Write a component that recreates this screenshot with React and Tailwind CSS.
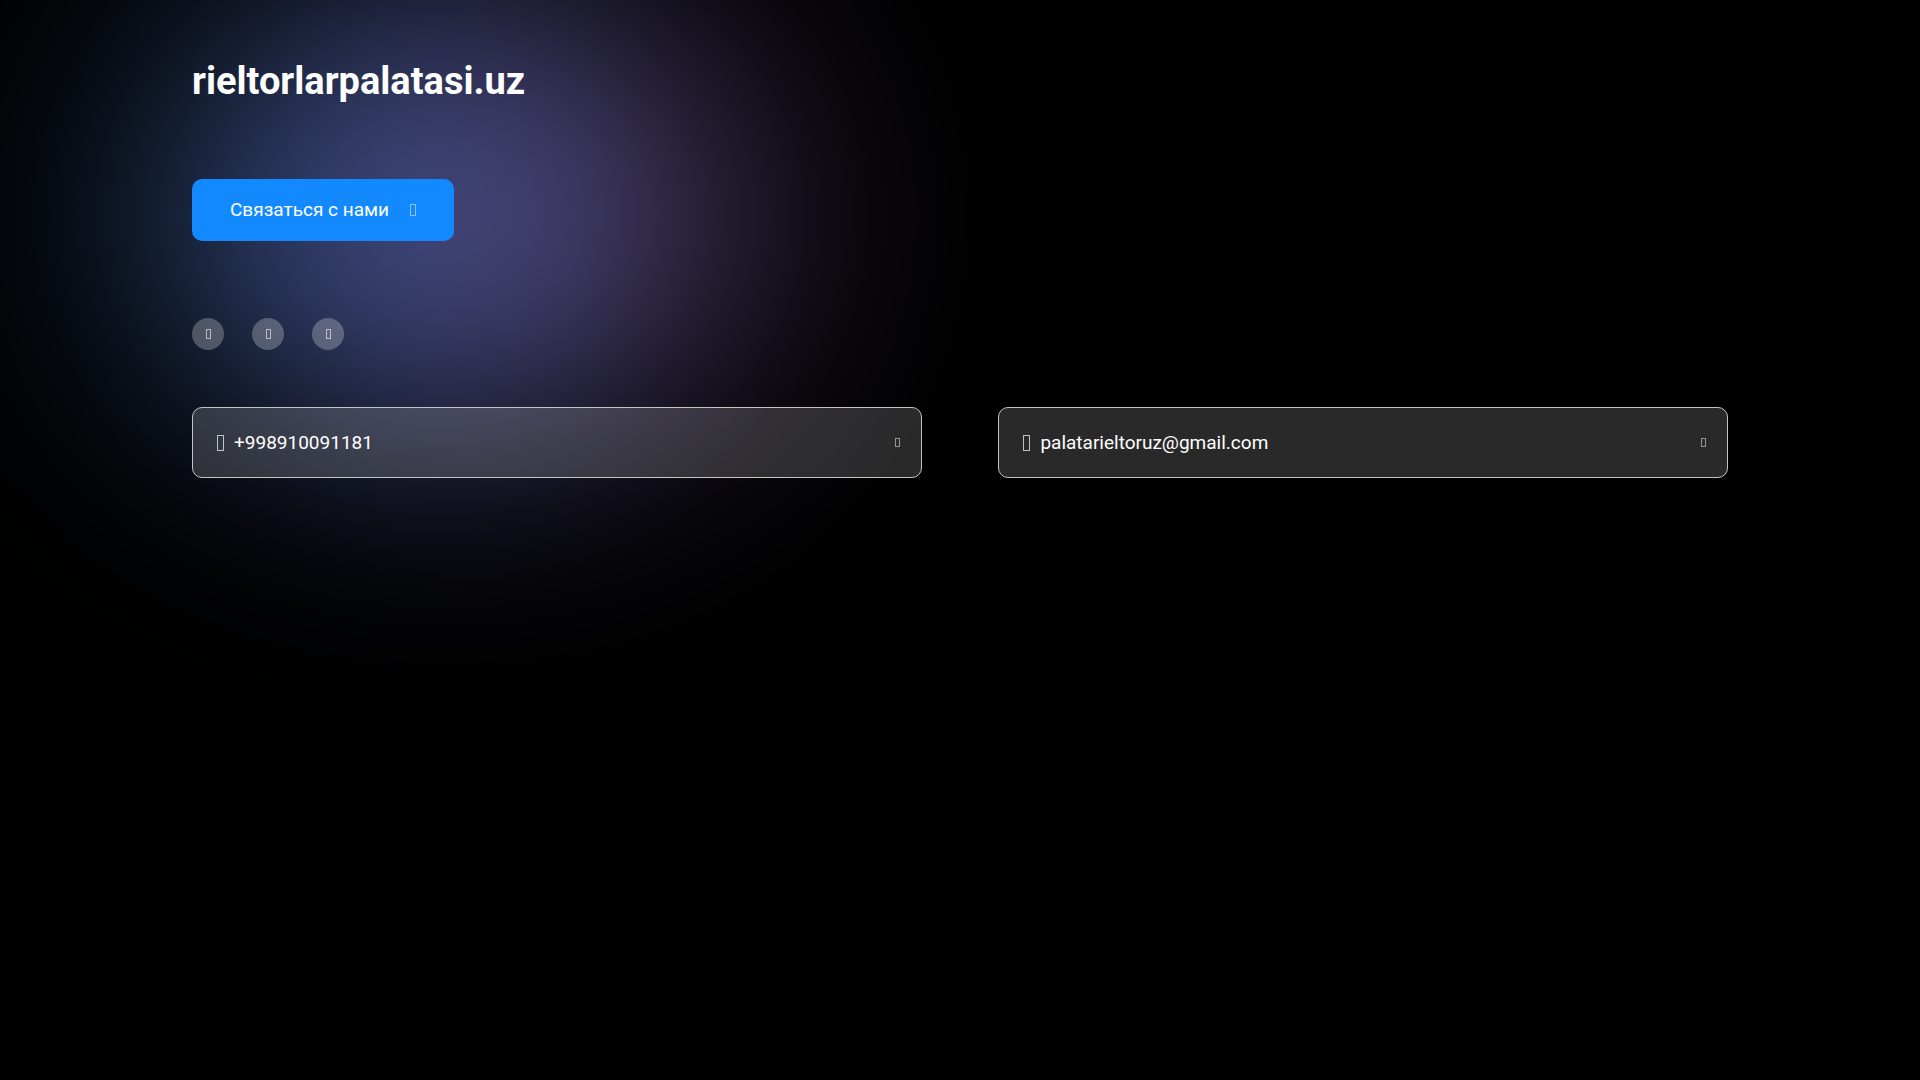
import React from "react";
import clsx from "clsx";

const socials = [
    { label: "Telegram", href: "#telegram" },
    { label: "Instagram", href: "#instagram" },
    { label: "Facebook", href: "#facebook" },
];

const contacts = [
    { text: "+998910091181", href: "tel:+998910091181" },
    { text: "palatarieltoruz@gmail.com", href: "mailto:palatarieltoruz@gmail.com" },
];

// empty glyph box
const Glyph = ({ className }) => (
    <span aria-hidden="true" className={clsx("block shrink-0 border", className)} />
);

const Glow = () => (
    <div
        aria-hidden="true"
        className="pointer-events-none absolute left-[130px] top-0 h-[430px] w-[640px] rounded-[50%] bg-linear-to-r from-[#123e60] via-[#505496] to-[#442a46] blur-[130px]"
    />
);

const ContactCard = ({ text, href }) => (
    <a
        href={href}
        className="flex flex-1 items-center rounded-[10px] border border-[#c4c4c0] bg-white/16 py-5 pr-[21px] pl-6 text-[19px] leading-[29px]"
    >
        <Glyph className="h-4 w-[7px] border-white/70" />
        <span className="ml-[10px]">{text}</span>
        <Glyph className="ml-auto h-[9px] w-[5px] border-white/50" />
    </a>
);

const App = () => {
    return (
        <div className="relative min-h-screen overflow-hidden bg-black font-['Roboto',sans-serif] text-white">
            <Glow />
            <main className="relative mx-auto w-4/5 pt-[57px]">
                <h1 className="text-[38px] leading-[48px] font-bold">rieltorlarpalatasi.uz</h1>

                <button
                    type="button"
                    className="mt-[74px] flex items-center gap-[21px] rounded-[10px] bg-[#1389ff] px-[38px] py-4 text-[19px] leading-[30px]"
                >
                    Связаться с нами
                    <Glyph className="h-3 w-[6px] border-white/50" />
                </button>

                <nav className="mt-[77px] flex gap-7">
                    {socials.map((item) => (
                        <a
                            key={item.label}
                            href={item.href}
                            aria-label={item.label}
                            className="flex size-8 items-center justify-center rounded-full bg-white/25"
                        >
                            <Glyph className="h-[10px] w-[5px] border-white/60" />
                        </a>
                    ))}
                </nav>

                <div className="mt-[57px] flex gap-[5%]">
                    {contacts.map((item) => (
                        <ContactCard key={item.text} {...item} />
                    ))}
                </div>
            </main>
        </div>
    );
};

export default App;
